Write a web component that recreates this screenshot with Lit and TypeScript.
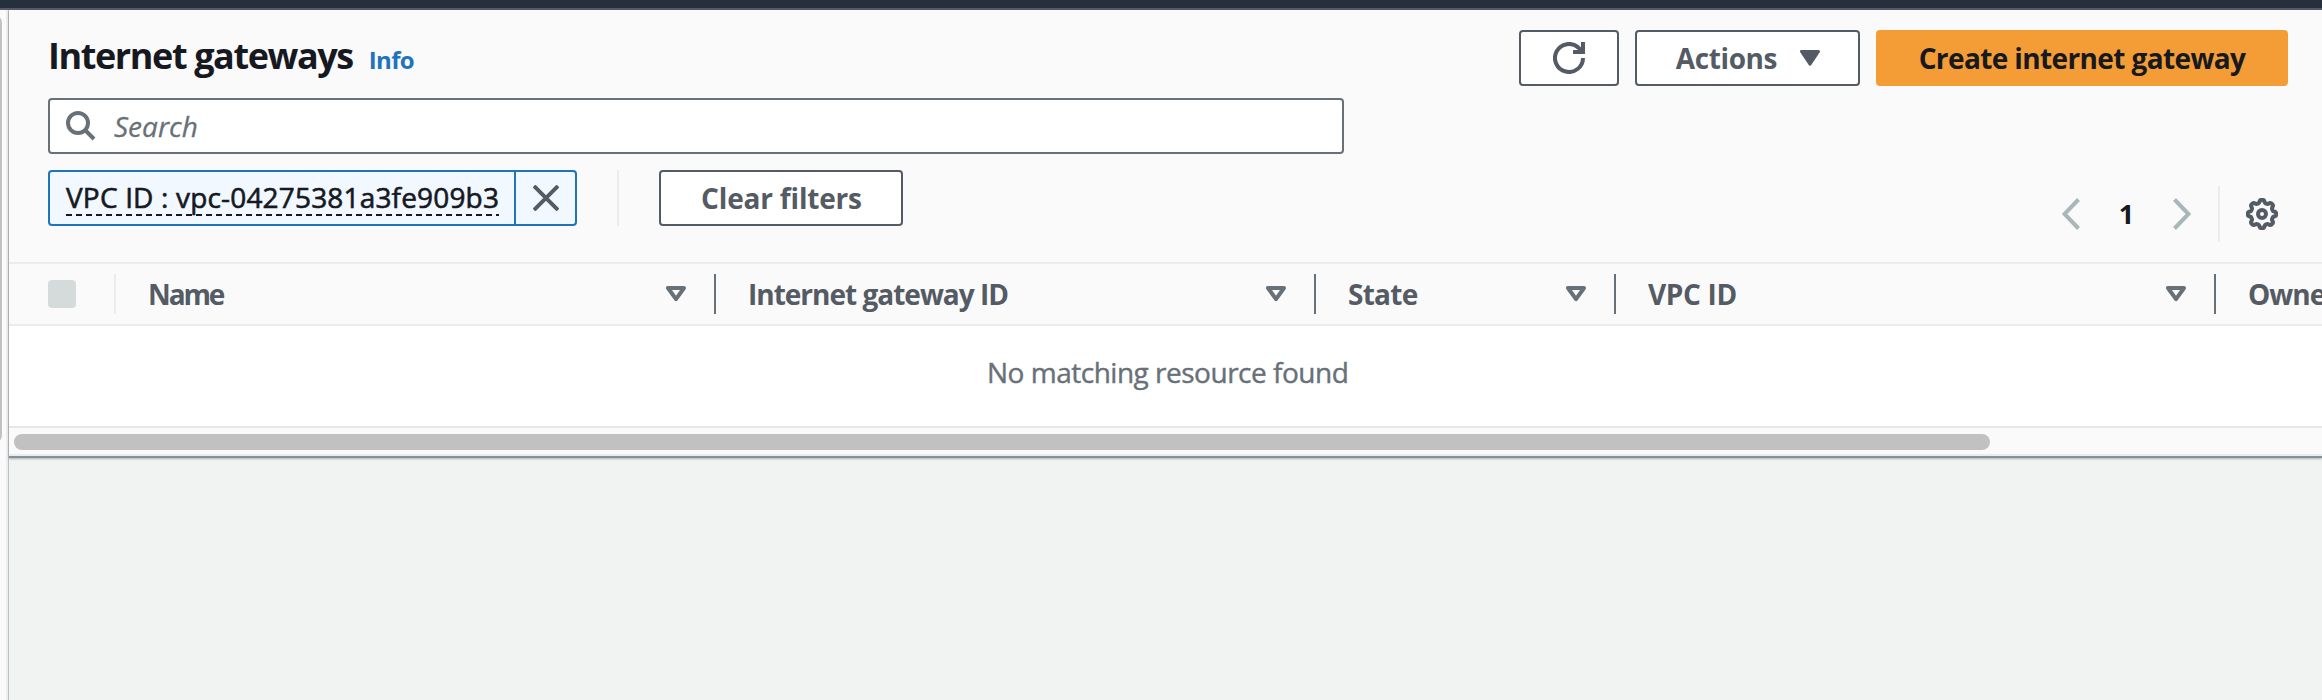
import { LitElement, html, css, svg } from "lit";

interface Column {
  label: string;
  width: number;
  tracking: number;
}

const columns: Column[] = [
  { label: "Name", width: 600, tracking: -2.1 },
  { label: "Internet gateway ID", width: 600, tracking: -1 },
  { label: "State", width: 300, tracking: -0.75 },
  { label: "VPC ID", width: 600, tracking: -0.35 },
  { label: "Owner", width: 300, tracking: -1 },
];

const gearPath = (() => {
  const points: string[] = [];
  const steps = 96;
  for (let i = 0; i < steps; i++) {
    const a = (i / steps) * Math.PI * 2;
    const wave = Math.cos(a * 8);
    const r = 12.7 + 1.5 * Math.tanh(wave * 2.2);
    points.push(`${(16 + r * Math.cos(a)).toFixed(2)} ${(16 + r * Math.sin(a)).toFixed(2)}`);
  }
  return `M${points.join("L")}Z`;
})();

const icon = (w: number, h: number, body: unknown) =>
  html`<svg width=${w} height=${h} viewBox="0 0 ${w} ${h}" fill="none" stroke="currentColor">${body}</svg>`;

const searchIcon = icon(30, 30, svg`<circle cx="12" cy="12" r="10" stroke-width="4"/><path d="M19 19L28 28" stroke-width="4"/>`);
const closeIcon = icon(26, 26, svg`<path d="M1 1L25 25M25 1L1 25" stroke-width="4"/>`);
const refreshIcon = icon(32, 32, svg`<path d="M30 16A14 14 0 1 1 25.5 5.7L29 9.6" stroke-width="4"/><path d="M20 10H30V0" stroke-width="4"/>`);
const caretIcon = icon(20, 16, svg`<path d="M1.5 1.5H18.5L10 14.2Z" fill="currentColor" stroke-width="3" stroke-linejoin="round"/>`);
const sortIcon = icon(20, 16, svg`<path d="M2 2H18L10 13.2Z" stroke-width="4" stroke-linejoin="round"/>`);
const prevIcon = icon(18, 32, svg`<path d="M16.5 1.5L2.5 16L16.5 30.5" stroke-width="4"/>`);
const nextIcon = icon(18, 32, svg`<path d="M1.5 1.5L15.5 16L1.5 30.5" stroke-width="4"/>`);
const gearIcon = icon(32, 32, svg`<path d=${gearPath} stroke-width="4" stroke-linejoin="round"/><circle cx="16" cy="16" r="4" stroke-width="4"/>`);

class AppRoot extends LitElement {
  static styles = css`
    :host {
      display: flex;
      flex-direction: column;
      width: 100%;
      height: 700px;
      overflow: hidden;
      background: #f1f3f3;
      color: #16191f;
      font: 28px/34px "Open Sans", "Noto Sans", sans-serif;
    }
    * { box-sizing: border-box; }
    svg { display: block; flex: none; }
    .topbar { flex: none; height: 10px; background: #262f3e; border-bottom: 2px solid #545b64; }
    .body { flex: 1; display: flex; min-height: 0; }
    .gutter { flex: none; width: 8px; background: #fafafa; border-right: 2px solid #ededed; padding-top: 8px; }
    .gutter-thumb { width: 2px; height: 422px; background: #c1c1c1; border-top-right-radius: 3px 10px; border-bottom-right-radius: 3px 10px; }
    .main { flex: 1; min-width: 0; border-left: 1px solid #bac1c4; }
    .panel { background: #fafafa; border-bottom: 2px solid #879092; box-shadow: 0 1px 2px rgba(0, 28, 36, 0.3); }
    .header { height: 252px; padding: 20px 34px 20px 39px; display: flex; justify-content: space-between; }
    .left { width: 1296px; }
    .title-row { height: 56px; display: flex; align-items: baseline; line-height: 52px; }
    .title { font-size: 36px; font-weight: 700; letter-spacing: -1.4px; margin: 0; }
    .info { font-size: 24px; font-weight: 700; color: #2074b9; margin-left: 16px; letter-spacing: -0.7px; }
    .search { height: 56px; margin-top: 12px; border: 2px solid #687078; border-radius: 4px; background: #fff; display: flex; align-items: center; padding: 0 16px 0; color: #687078; font-style: italic; gap: 18px; -webkit-text-stroke: 0.3px; }
    .filters { display: flex; height: 56px; margin-top: 16px; }
    .token { display: flex; width: 529px; border: 2px solid #2074b9; border-radius: 4px; background: #f1f8ff; }
    .token-label { flex: 1; padding: 8px 0 0 16px; }
    .token-text { display: block; width: 433px; height: 36px; letter-spacing: 0.17px; white-space: nowrap; -webkit-text-stroke: 0.6px; background: repeating-linear-gradient(90deg, #16191f 0 6px, transparent 6px 10px) 0 100% / 100% 2px no-repeat; }
    .dismiss { width: 61px; border-left: 2px solid #2074b9; display: grid; place-items: center; color: #545b64; }
    .divider { width: 2px; background: #eaeded; }
    .filters .divider { margin: 0 40px; }
    .btn { height: 56px; border: 2px solid #545b64; border-radius: 4px; background: #fff; color: #545b64; font-weight: 700; display: flex; align-items: center; justify-content: center; white-space: nowrap; }
    .btn span { padding-bottom: 1px; }
    .clear { width: 244px; letter-spacing: -0.18px; padding-left: 1px; }
    .right { display: flex; flex-direction: column; justify-content: space-between; align-items: flex-end; }
    .actions { display: flex; gap: 16px; }
    .refresh { width: 100px; }
    .menu { width: 225px; gap: 23px; letter-spacing: -0.4px; padding-left: 1px; }
    .primary { width: 412px; background: #f49d37; border-color: #f49d37; color: #16191f; letter-spacing: -0.62px; }
    .pager { display: flex; align-items: center; height: 56px; padding-right: 10px; color: #aab7b8; }
    .page { width: 93px; text-align: center; color: #16191f; font-weight: 700; font-size: 27px; padding: 0 0 1px 0; }
    .pager .divider { height: 56px; margin: 0 26px 0 27px; }
    .gear { color: #545b64; }
    .thead { display: flex; align-items: center; height: 64px; border: solid #eaeded; border-width: 2px 0; overflow: hidden; }
    .select { flex: none; width: 107px; height: 40px; padding: 4px 0 0 39px; border-right: 2px solid #eaeded; }
    .checkbox { width: 28px; height: 28px; margin-top: 2px; border-radius: 4px; background: #d5dbdb; }
    .col { flex: none; height: 40px; display: flex; align-items: center; justify-content: space-between; padding: 0 28px 0 32px; border-right: 2px solid #687078; color: #545b64; font-weight: 700; }
    .col span { padding-bottom: 1px; white-space: nowrap; }
    .col svg { color: #687078; }
    .empty { height: 102px; background: #fff; border-bottom: 2px solid #e7e7e7; padding: 29px 0 0 978px; color: #687078; letter-spacing: -0.49px; line-height: 34px; -webkit-text-stroke: 0.4px; }
    .scroll { height: 28px; padding: 6px 0 0 5px; border-bottom: 2px solid #eaeded; }
    .scroll-thumb { width: 1976px; height: 16px; border-radius: 8px; background: #c1c1c1; }
  `;

  render() {
    return html`
      <div class="topbar"></div>
      <div class="body">
        <div class="gutter"><div class="gutter-thumb"></div></div>
        <main class="main">
          <section class="panel">
            <div class="header">
              <div class="left">
                <div class="title-row"><h1 class="title">Internet gateways</h1><a class="info">Info</a></div>
                <div class="search">${searchIcon}<span>Search</span></div>
                <div class="filters">
                  <div class="token">
                    <div class="token-label"><span class="token-text">VPC ID : vpc-04275381a3fe909b3</span></div>
                    <div class="dismiss">${closeIcon}</div>
                  </div>
                  <div class="divider"></div>
                  <div class="btn clear"><span>Clear filters</span></div>
                </div>
              </div>
              <div class="right">
                <div class="actions">
                  <div class="btn refresh">${refreshIcon}</div>
                  <div class="btn menu"><span>Actions</span>${caretIcon}</div>
                  <div class="btn primary"><span>Create internet gateway</span></div>
                </div>
                <div class="pager">
                  ${prevIcon}<span class="page">1</span>${nextIcon}
                  <div class="divider"></div>
                  <div class="gear">${gearIcon}</div>
                </div>
              </div>
            </div>
            <div class="thead">
              <div class="select"><div class="checkbox"></div></div>
              ${columns.map((c) => html`
                <div class="col" style="width:${c.width}px;letter-spacing:${c.tracking}px"><span>${c.label}</span>${sortIcon}</div>`)}
            </div>
            <div class="empty">No matching resource found</div>
            <div class="scroll"><div class="scroll-thumb"></div></div>
          </section>
        </main>
      </div>
    `;
  }
}
customElements.define("app-root", AppRoot);
